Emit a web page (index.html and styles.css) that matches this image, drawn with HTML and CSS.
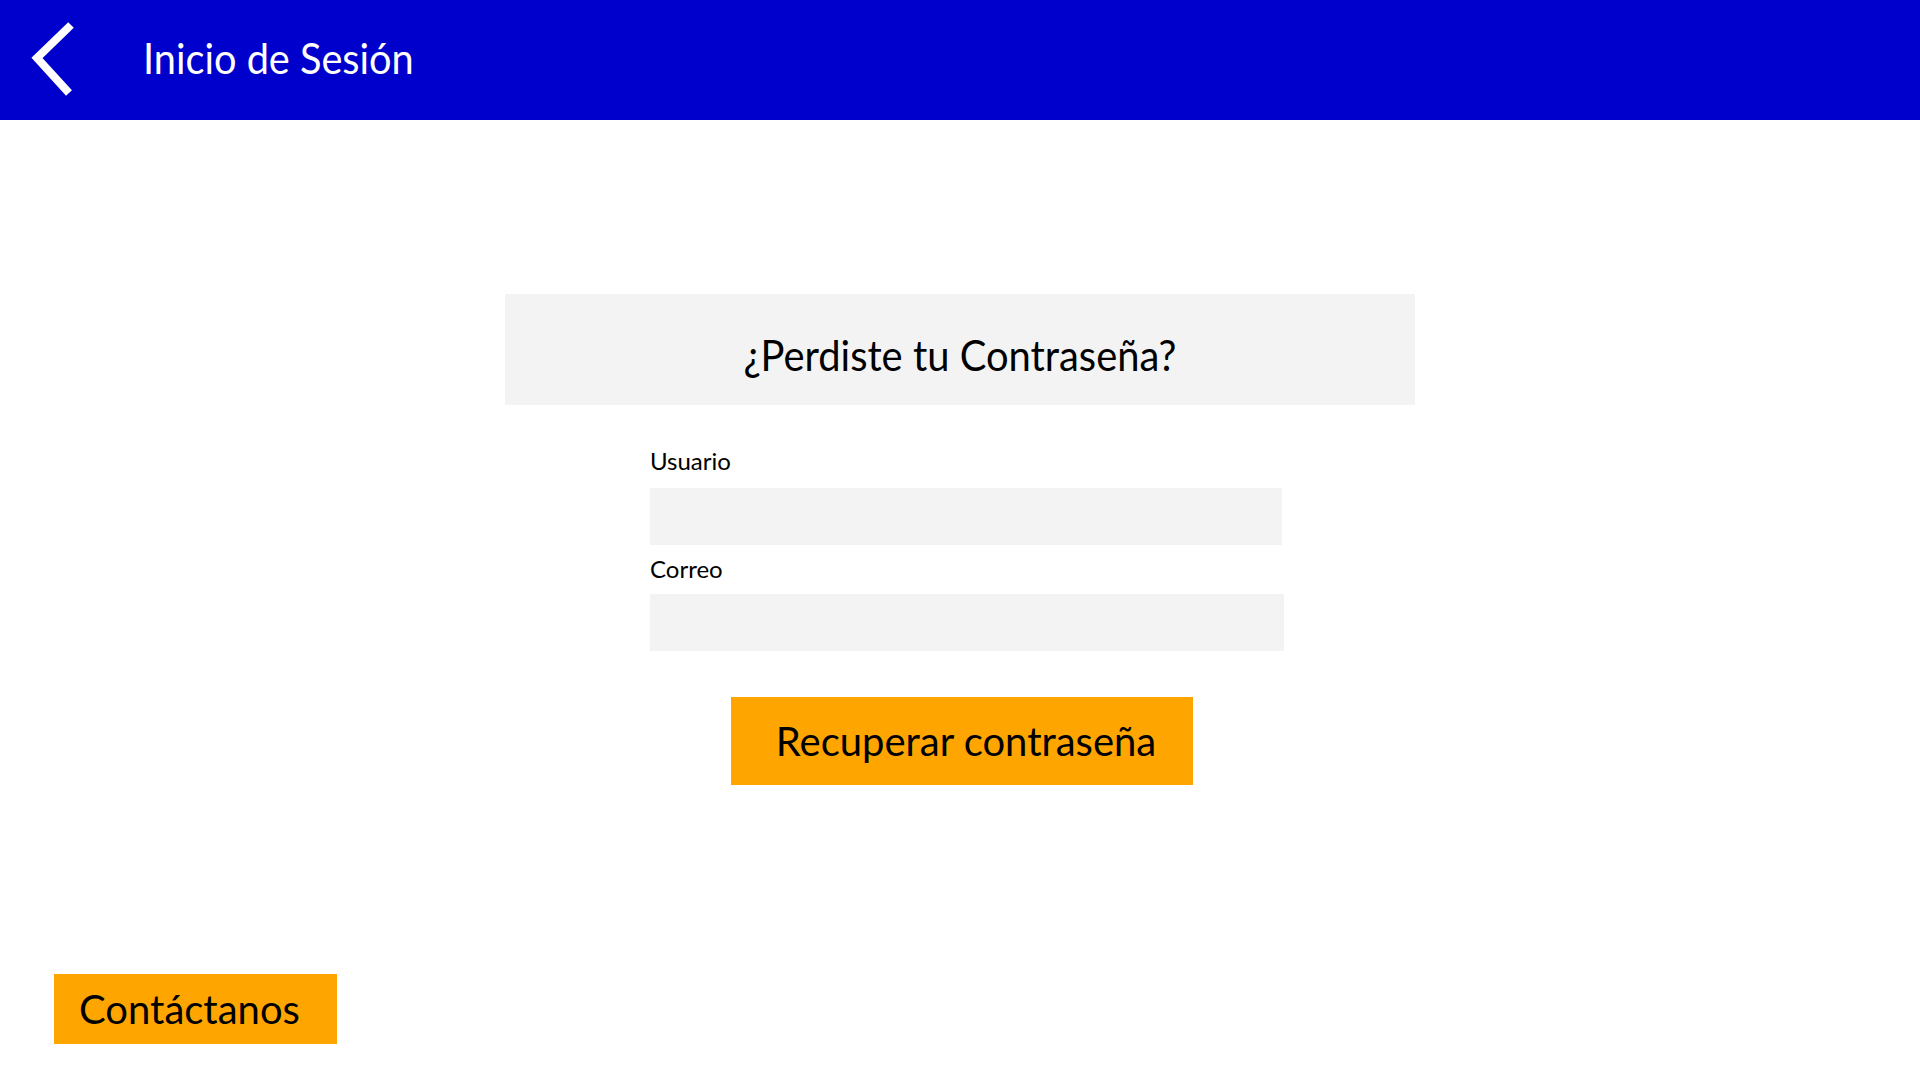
FILE: index.html
```html
<!DOCTYPE html>
<html lang="es">
<head>
<meta charset="utf-8">
<title>Inicio de Sesión</title>
<link rel="stylesheet" href="styles.css">
</head>
<body>
<header class="topbar">
  <button class="back" aria-label="Volver">
    <svg width="50" height="80" viewBox="0 0 50 80">
      <polyline points="46,5 12,38 44,73" fill="none" stroke="#ffffff" stroke-width="8" stroke-linejoin="miter"/>
    </svg>
  </button>
  <h1 class="topbar-title"><span class="narrow">Inicio de Sesión</span></h1>
</header>
<main class="content">
  <div class="panel">
    <div class="panel-head"><span class="narrow-center">¿Perdiste tu Contraseña?</span></div>
    <form class="form">
      <label class="field-label label-user">Usuario</label>
      <div class="field field-user"></div>
      <label class="field-label label-mail">Correo</label>
      <div class="field field-mail"></div>
      <div class="action">
        <button type="button" class="btn-primary">Recuperar contraseña</button>
      </div>
    </form>
  </div>
</main>
<footer class="bottom">
  <button type="button" class="btn-contact">Contáctanos</button>
</footer>
</body>
</html>
```
FILE: styles.css
```css
* { box-sizing: border-box; }
html, body { margin: 0; padding: 0; }
body {
  width: 1920px;
  height: 1080px;
  display: flex;
  flex-direction: column;
  font-family: Lato, "Open Sans", sans-serif;
  background: #ffffff;
  color: #000000;
  overflow: hidden;
}
.topbar {
  height: 120px;
  flex: none;
  background: #0000cc;
  display: flex;
  align-items: center;
}
.back {
  background: none;
  border: 0;
  padding: 0;
  margin: 0 0 0 25px;
  width: 50px;
  height: 80px;
  display: flex;
  cursor: pointer;
}
.back svg { display: block; }
.topbar-title {
  margin: 0 0 0 68px;
  font-size: 42px;
  font-weight: 400;
  line-height: 50px;
  color: #ffffff;
  padding-bottom: 4px;
}
.narrow {
  display: inline-block;
  transform: scaleX(0.945);
  transform-origin: left center;
}
.narrow-center {
  display: inline-block;
  transform: scaleX(0.95);
  transform-origin: center center;
}
.content {
  flex: 1;
  padding-top: 174px;
}
.panel {
  width: 910px;
  margin: 0 auto;
}
.panel-head {
  height: 111px;
  background: #f3f3f3;
  text-align: center;
  font-size: 42px;
  line-height: 50px;
  padding-top: 36px;
}
.form {
  padding-left: 145px;
}
.field-label {
  display: block;
  font-size: 24px;
  line-height: 29px;
}
.label-user { margin-top: 41px; }
.label-mail { margin-top: 9px; }
.field {
  background: #f3f3f3;
  height: 57px;
}
.field-user { width: 632px; margin-top: 13px; }
.field-mail { width: 634px; margin-top: 11px; }
.action {
  padding-left: 81px;
  margin-top: 46px;
}
.btn-primary {
  display: block;
  width: 462px;
  height: 88px;
  border: 0;
  background: #ffa500;
  font-family: Lato, "Open Sans", sans-serif;
  font-size: 40px;
  line-height: 48px;
  color: #000000;
  padding: 0 0 0 8px;
  text-align: center;
}
.bottom {
  flex: none;
  padding: 0 0 36px 54px;
}
.btn-contact {
  display: block;
  width: 283px;
  height: 70px;
  border: 0;
  background: #ffa500;
  font-family: Lato, "Open Sans", sans-serif;
  font-size: 40px;
  line-height: 48px;
  color: #000000;
  padding: 0 0 0 25px;
  text-align: left;
}
```
